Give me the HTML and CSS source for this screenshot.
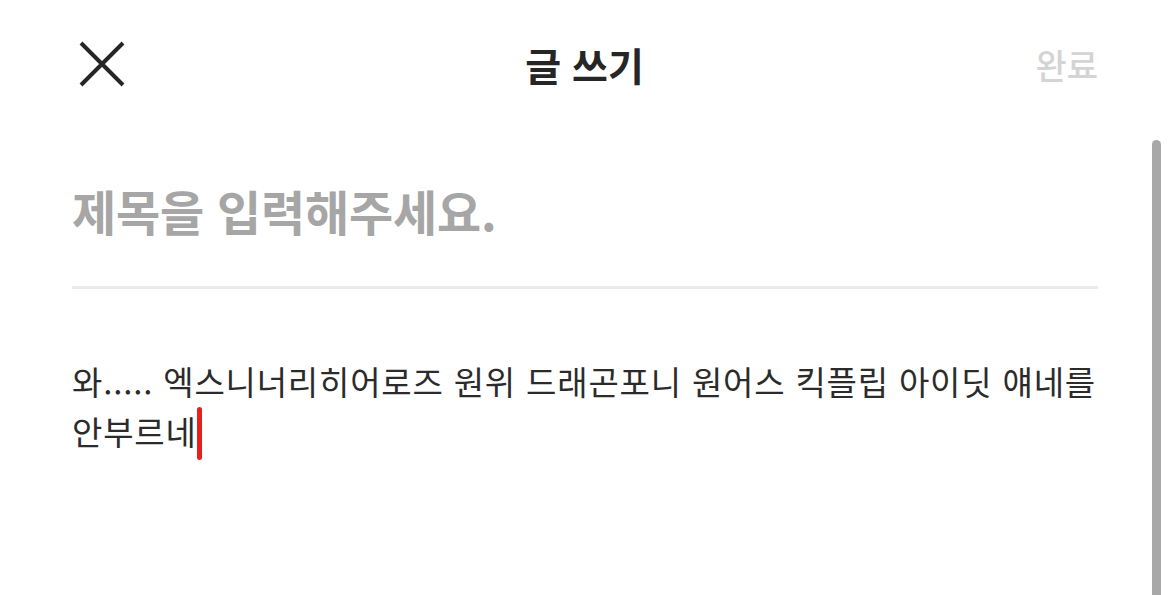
FILE: index.html
```html
<!DOCTYPE html>
<html lang="ko">
<head>
	<meta charset="UTF-8">
	<title>글 쓰기</title>
	<link rel="stylesheet" href="styles.css">
</head>
<body>
	<div id="page">
		<div id="header">
			<span class="close">
				<svg width="46" height="46" viewBox="0 0 46 46">
					<path d="M2 2L44 44M44 2L2 44" stroke="#262626" stroke-width="4" fill="none"/>
				</svg>
			</span>
			<h1 class="title">글 쓰기</h1>
			<span class="done">완료</span>
		</div>
		<div id="editor">
			<div class="subject">제목을 입력해주세요.</div>
			<div class="line"></div>
			<div class="body">와..... 엑스니너리히어로즈 원위 드래곤포니 원어스 킥플립 아이딧 얘네를 안부르네<span class="caret"></span></div>
		</div>
		<div id="scrollbar"></div>
	</div>
</body>
</html>
```

FILE: styles.css
```css
*{
	margin: 0;
	padding: 0;
}
html, body{
	background: #fff;
	height: 100%;
	overflow: hidden;
}
body{
	font-family: "Noto Sans CJK KR", "Noto Sans", sans-serif;
	color: #2a2a2a;
}
#page{
	position: relative;
	height: 100%;
}
#header{
	height: 128px;
	padding: 0 72px 0 79px;
	display: grid;
	grid-template-columns: 1fr auto 1fr;
	align-items: center;
}
#header .close{
	display: flex;
	width: 46px;
	height: 46px;
}
#header .title{
	font-size: 39px;
	font-weight: 700;
	color: #262626;
	margin-right: 8px;
}
#header .done{
	justify-self: end;
	font-size: 34px;
	font-weight: 500;
	color: #d4d4d4;
}
#editor{
	padding: 50px 72px 0;
}
.subject{
	font-size: 48px;
	font-weight: 700;
	line-height: 64px;
	letter-spacing: -0.2px;
	color: #a6a6a6;
}
.line{
	height: 3px;
	background: #ebebeb;
	margin-top: 44px;
}
.body{
	margin-top: 67px;
	font-size: 33px;
	line-height: 50px;
	letter-spacing: 0.8px;
	word-break: keep-all;
	color: #2b2b2b;
}
.caret{
	display: inline-block;
	width: 5px;
	height: 53px;
	border-radius: 3px;
	background: #e8201c;
	vertical-align: middle;
	margin-left: 0;
	position: relative;
	top: -3px;
}
/* scroll thumb on the right edge */
#scrollbar{
	position: absolute;
	right: 9px;
	top: 140px;
	bottom: 0;
	width: 9px;
	border-radius: 5px 5px 0 0;
	background: #a8a8a8;
}
```
